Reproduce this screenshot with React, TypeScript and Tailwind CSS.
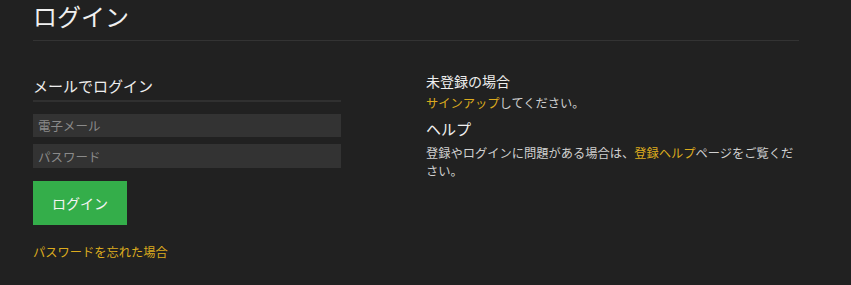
export default function App() {
  const link = "text-[#dcab1e]";
  return (
    <div
      className="w-[851px] h-[285px] overflow-hidden bg-[#212121] text-[#e8e8e8]"
      style={{ fontFamily: '"Noto Sans CJK JP", "Noto Sans", sans-serif' }}
    >
      <div className="ml-[33px] w-[766px]">
        <h1 className="h-[41px] border-b border-[#333333] text-[24px] leading-[32px] font-normal text-[#f0f0f0]">
          ログイン
        </h1>

        <div className="flex gap-[85px]">
          {/* left: mail login */}
          <div className="w-[308px]">
            <h2 className="mt-[33px] h-[28px] border-b-2 border-[#303030] text-[15px] leading-[24px] text-[#eeeeee]">
              メールでログイン
            </h2>
            <input
              className="mt-[12px] block w-full h-[23px] bg-[#333333] px-[5px] text-[12.5px] text-[#ddd] placeholder:text-[#8a8a8a] outline-none"
              placeholder="電子メール"
            />
            <input
              type="password"
              className="mt-[7px] block w-full h-[24px] bg-[#333333] px-[5px] text-[12.5px] text-[#ddd] placeholder:text-[#8a8a8a] outline-none"
              placeholder="パスワード"
            />
            <button className="mt-[13px] w-[94px] h-[44px] bg-[#34ae4a] text-[14px] text-[#f4f4f4]">
              ログイン
            </button>
            <div className={`mt-[18px] text-[12.25px] leading-[18px] ${link}`}>
              パスワードを忘れた場合
            </div>
          </div>

          {/* right: info */}
          <div className="w-[373px]">
            <div className="mt-[30px] text-[14px] leading-[20px] text-[#eeeeee]">未登録の場合</div>
            <div className="mt-[3px] text-[12.25px] leading-[18px] text-[#d0d0d0]">
              <span className={link}>サインアップ</span>してください。
            </div>
            <div className="mt-[7px] text-[15px] leading-[20px] text-[#f0f0f0]">ヘルプ</div>
            <p className="mt-[5px] text-[12.25px] leading-[18px] text-[#d0d0d0]">
              登録やログインに問題がある場合は、<span className={link}>登録ヘルプ</span>ページをご覧ください。
            </p>
          </div>
        </div>
      </div>
    </div>
  );
}
